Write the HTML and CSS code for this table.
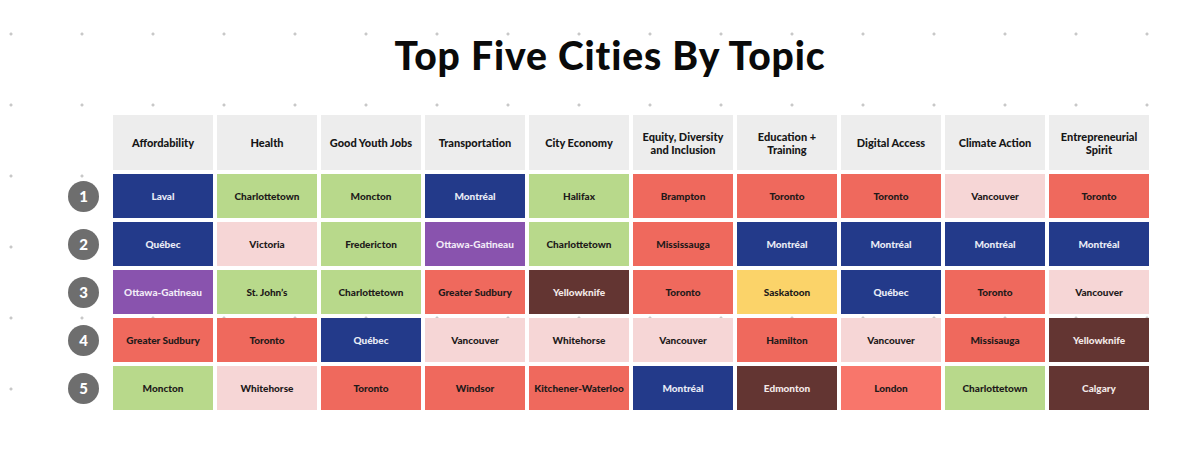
FILE: index.html
```html
<!DOCTYPE html>
<html lang="en">
<head>
<meta charset="utf-8">
<title>Top Five Cities By Topic</title>
<link rel="stylesheet" href="styles.css">
</head>
<body>
<main class="page">
  <h1 class="title">Top Five Cities By Topic</h1>
  <div class="chart">
    <div class="corner"></div>
    <div class="head">Affordability</div>
    <div class="head">Health</div>
    <div class="head">Good Youth Jobs</div>
    <div class="head">Transportation</div>
    <div class="head">City Economy</div>
    <div class="head">Equity, Diversity<br>and Inclusion</div>
    <div class="head">Education +<br>Training</div>
    <div class="head">Digital Access</div>
    <div class="head">Climate Action</div>
    <div class="head">Entrepreneurial<br>Spirit</div>

    <div class="rank"><span>1</span></div>
    <div class="cell navy">Laval</div>
    <div class="cell green">Charlottetown</div>
    <div class="cell green">Moncton</div>
    <div class="cell navy">Montréal</div>
    <div class="cell green">Halifax</div>
    <div class="cell coral">Brampton</div>
    <div class="cell coral">Toronto</div>
    <div class="cell coral">Toronto</div>
    <div class="cell pink">Vancouver</div>
    <div class="cell coral">Toronto</div>

    <div class="rank"><span>2</span></div>
    <div class="cell navy">Québec</div>
    <div class="cell pink">Victoria</div>
    <div class="cell green">Fredericton</div>
    <div class="cell purple">Ottawa-Gatineau</div>
    <div class="cell green">Charlottetown</div>
    <div class="cell coral">Mississauga</div>
    <div class="cell navy">Montréal</div>
    <div class="cell navy">Montréal</div>
    <div class="cell navy">Montréal</div>
    <div class="cell navy">Montréal</div>

    <div class="rank"><span>3</span></div>
    <div class="cell purple">Ottawa-Gatineau</div>
    <div class="cell green">St. John’s</div>
    <div class="cell green">Charlottetown</div>
    <div class="cell coral">Greater Sudbury</div>
    <div class="cell brown">Yellowknife</div>
    <div class="cell coral">Toronto</div>
    <div class="cell yellow">Saskatoon</div>
    <div class="cell navy">Québec</div>
    <div class="cell coral">Toronto</div>
    <div class="cell pink">Vancouver</div>

    <div class="rank"><span>4</span></div>
    <div class="cell coral">Greater Sudbury</div>
    <div class="cell coral">Toronto</div>
    <div class="cell navy">Québec</div>
    <div class="cell pink">Vancouver</div>
    <div class="cell pink">Whitehorse</div>
    <div class="cell pink">Vancouver</div>
    <div class="cell coral">Hamilton</div>
    <div class="cell pink">Vancouver</div>
    <div class="cell coral">Missisauga</div>
    <div class="cell brown">Yellowknife</div>

    <div class="rank"><span>5</span></div>
    <div class="cell green">Moncton</div>
    <div class="cell pink">Whitehorse</div>
    <div class="cell coral">Toronto</div>
    <div class="cell coral">Windsor</div>
    <div class="cell coral">Kitchener-Waterloo</div>
    <div class="cell navy">Montréal</div>
    <div class="cell brown">Edmonton</div>
    <div class="cell salmon">London</div>
    <div class="cell green">Charlottetown</div>
    <div class="cell brown">Calgary</div>
  </div>
</main>
</body>
</html>
```

FILE: styles.css
```css
html, body {
  margin: 0;
  padding: 0;
}

body {
  width: 1200px;
  height: 455px;
  overflow: hidden;
  background-color: #ffffff;
  background-image: radial-gradient(circle at 2px 2px, #c8c8c8 1.1px, rgba(255,255,255,0) 1.9px);
  background-size: 71px 71px;
  background-position: 9px 32px;
  font-family: Lato, "Open Sans", "Liberation Sans", sans-serif;
  color: #1b1b1b;
}

.page {
  padding-top: 29px;
}

.title {
  margin: 0;
  padding-left: 20px;
  text-align: center;
  font-family: Lato, "Open Sans", sans-serif;
  font-weight: 900;
  font-size: 39px;
  line-height: 52px;
  color: #0a0a0a;
  letter-spacing: 0.9px;
}

.chart {
  display: grid;
  grid-template-columns: 41px repeat(10, 100px);
  grid-template-rows: 55px repeat(5, 44px);
  gap: 4px;
  margin: 34px 0 0 68px;
}

.head {
  background: #ededed;
  display: flex;
  align-items: center;
  justify-content: center;
  text-align: center;
  font-weight: 900;
  font-size: 11px;
  line-height: 13px;
  color: #161616;
}

.rank {
  display: flex;
  align-items: center;
}

.rank span {
  width: 31px;
  height: 31px;
  border-radius: 50%;
  background: #6e6e6e;
  color: #ffffff;
  display: flex;
  align-items: center;
  justify-content: center;
  font-weight: 900;
  font-size: 15px;
}

.cell {
  display: flex;
  align-items: center;
  justify-content: center;
  text-align: center;
  font-weight: 900;
  font-size: 10px;
  color: #1e1a1a;
}

.navy { background: #233a8a; color: #e9ecf6; }
.green { background: #b8d98b; }
.pink { background: #f6d6d6; }
.coral { background: #ef695d; }
.salmon { background: #f8766b; }
.purple { background: #8953ae; color: #f1eaf7; }
.brown { background: #633532; color: #f3e9e8; }
.yellow { background: #fbd369; }
```
